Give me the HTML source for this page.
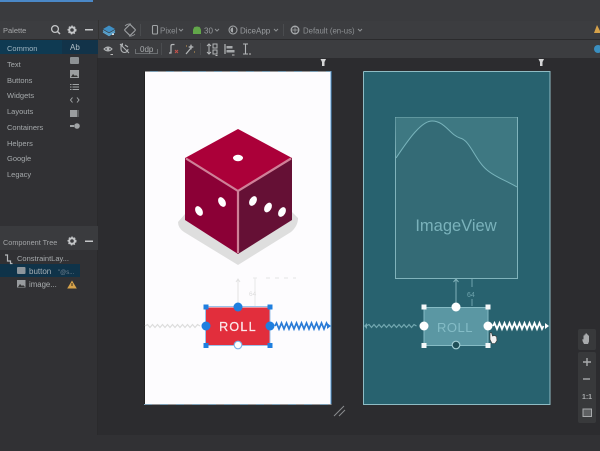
<!DOCTYPE html>
<html><head><meta charset="utf-8"><style>
html,body{margin:0;padding:0;background:#2b2b2e;width:600px;height:451px;overflow:hidden}
svg{display:block;filter:blur(.3px)}
text{font-family:"Liberation Sans",sans-serif}
</style></head><body>
<svg width="600" height="451" viewBox="0 0 600 451" xmlns="http://www.w3.org/2000/svg">
<!-- backgrounds -->
<rect width="600" height="451" fill="#2c2c2f"/>
<rect width="600" height="21" fill="#3a3b3e"/>
<rect x="0" y="0" width="93" height="2" fill="#4a88c7"/>
<rect y="21" width="600" height="19" fill="#3c3d40"/>
<rect y="39" width="600" height="1" fill="#2b2b2d"/>
<rect x="98" y="40" width="502" height="18" fill="#3c3d40"/>
<rect x="0" y="40" width="98" height="395" fill="#313134"/>
<rect x="98" y="20" width="1" height="20" fill="#333"/>
<rect x="97" y="58" width="1" height="377" fill="#2a2a2c"/>
<rect y="435" width="600" height="16" fill="#313134"/>
<!-- palette -->
<text x="3" y="33" font-size="7.500" fill="#a5a7a9">Palette</text>
<circle cx="55" cy="29" r="3.400" fill="none" stroke="#c4c6c8" stroke-width="1.300"/><path d="M57.500 31.500L60 34" stroke="#c4c6c8" stroke-width="1.500"/>
<circle cx="72" cy="30" r="2.800" fill="none" stroke="#c4c6c8" stroke-width="2"/><circle cx="72" cy="30" r="4" fill="none" stroke="#c4c6c8" stroke-width="1" stroke-dasharray="1.500 1.500"/>
<rect x="85" y="29" width="8" height="1.500" fill="#c4c6c8"/>
<rect y="40" width="62" height="14" fill="#0f3a52"/>
<rect x="62" y="40" width="36" height="14" fill="#123349"/>
<g font-size="7.500" fill="#a5a9ab">
<text x="7" y="51" fill="#9fb4c0">Common</text>
<text x="7" y="67">Text</text>
<text x="7" y="83">Buttons</text>
<text x="7" y="98">Widgets</text>
<text x="7" y="114">Layouts</text>
<text x="7" y="130">Containers</text>
<text x="7" y="146">Helpers</text>
<text x="7" y="161">Google</text>
<text x="7" y="177">Legacy</text>
</g>
<text x="70" y="50" font-size="8" fill="#b3c0c8">Ab</text>
<rect x="70" y="57" width="9" height="7" rx="1" fill="#8d9194"/>
<rect x="70" y="70" width="9" height="8" fill="#9a9d9f"/><path d="M71 77l2-3 2 2 1-1 2 2z" fill="#333"/>
<path d="M70 84.500h1.500M70 87h1.500M70 89.500h1.500M72.500 84.500h6.500M72.500 87h6.500M72.500 89.500h6.500" stroke="#a0a3a5" stroke-width="1"/>
<path d="M72.500 97.500l-2 2.500 2 2.500M77 97.500l2 2.500-2 2.500" stroke="#a0a3a5" stroke-width="1" fill="none"/>
<rect x="70" y="110" width="9" height="7" fill="#9a9d9f"/><rect x="77" y="110" width="2" height="7" fill="#5a5c5e"/>
<rect x="70" y="125" width="4" height="2" fill="#a0a3a5"/><circle cx="77" cy="126" r="2.800" fill="#a0a3a5"/>
<!-- component tree -->
<rect x="0" y="226" width="98" height="24" fill="#3a3b3e"/>
<text x="3" y="245" font-size="7.300" fill="#a3a5a7">Component Tree</text>
<circle cx="72" cy="241" r="2.800" fill="none" stroke="#c4c6c8" stroke-width="2"/><circle cx="72" cy="241" r="4" fill="none" stroke="#c4c6c8" stroke-width="1" stroke-dasharray="1.500 1.500"/>
<rect x="85" y="240.500" width="8" height="1.500" fill="#c4c6c8"/>
<rect x="0" y="264" width="80" height="13" fill="#0f3349"/>
<path d="M5 255h2.500v6h3v2.500h2" fill="none" stroke="#b5b7b9" stroke-width="1.200"/>
<text x="17" y="261" font-size="7.500" fill="#a8acae">ConstraintLay...</text>
<rect x="17" y="267" width="8.500" height="7" rx="1" fill="#8d959b"/>
<text x="29" y="274" font-size="8" fill="#a8b0b5">button</text>
<text x="58" y="274" font-size="6" fill="#728290">"@s...</text>
<rect x="17" y="280" width="8.500" height="7.500" fill="#989b9e"/><path d="M18 287l2-3 2 2 1-1 2 2z" fill="#333"/>
<text x="29" y="287" font-size="7.800" fill="#a8acae">image...</text>
<path d="M72 280.500l4.800 8h-9.600z" fill="#d6a24a"/><rect x="71.500" y="283" width="1" height="3" fill="#3a3020"/>
<!-- toolbar 1 -->
<path d="M103 29l6-3.500 6 3.500-6 3.500z" fill="#3f8fc4"/><path d="M103 32l6 3.500 6-3.500M103 30.500l6 3.500 6-3.500" fill="none" stroke="#5aa5d2" stroke-width="1.200"/>
<rect x="112" y="33.500" width="2" height="1.500" fill="#ddd"/>
<rect x="126" y="26" width="8" height="8" rx="1" transform="rotate(45 130 30)" fill="none" stroke="#9da0a3" stroke-width="1.100"/>
<path d="M125 26a7 7 0 0 1 6-2M135 34a7 7 0 0 1-6 2" fill="none" stroke="#9da0a3" stroke-width=".8"/>
<rect x="140" y="24" width="1" height="12" fill="#4a4c4f"/>
<rect x="152.500" y="25.500" width="5" height="8.500" rx="1" fill="none" stroke="#a0a3a5" stroke-width="1.100"/>
<text x="160" y="33.500" font-size="8" fill="#8e9194">Pixel</text>
<path d="M179 29l2 2 2-2" fill="none" stroke="#8e9194"/>
<path d="M193 34v-3.500a4 4 0 0 1 8 0v3.500z" fill="#62a74a"/><path d="M194.500 27l1 1.500M199.500 27l-1 1.500" stroke="#62a74a"/>
<text x="204" y="33.500" font-size="8" fill="#9a9da0">30</text>
<path d="M215 29l2 2 2-2" fill="none" stroke="#8e9194"/>
<circle cx="233" cy="30" r="4" fill="none" stroke="#a6a9ab" stroke-width="1"/><path d="M233 27.500a2.500 2.500 0 0 0 0 5z" fill="#a6a9ab"/>
<text x="240" y="33.500" font-size="8" fill="#9a9da0">DiceApp</text>
<path d="M274 29l2 2 2-2" fill="none" stroke="#8e9194"/>
<rect x="283" y="24" width="1" height="12" fill="#4a4c4f"/>
<circle cx="295" cy="30" r="3.800" fill="none" stroke="#a6a9ab" stroke-width="1.300"/><path d="M291 30h8M295 26v8" stroke="#a6a9ab" stroke-width=".7"/>
<text x="303" y="33.500" font-size="7.800" fill="#8e9194">Default (en-us)</text>
<path d="M358 29l2 2 2-2" fill="none" stroke="#8e9194"/>
<path d="M597 25l4 8h-7z" fill="#d6a24a"/>
<circle cx="598" cy="49" r="4" fill="#3a8fc0"/>
<!-- toolbar 2 -->
<path d="M104 49q4-4 8 0q-4 4-8 0z" fill="none" stroke="#b4b7b9" stroke-width="1"/><circle cx="108" cy="49" r="1.500" fill="#b4b7b9"/><path d="M110.500 54.500h2.500" stroke="#bbb"/>
<path d="M121 44v5a3.500 3.500 0 0 0 7 0M120 44l9 9M125 45l3 2" fill="none" stroke="#b0b3b5" stroke-width="1.100"/><path d="M121 44l2 2v-3z" fill="#b0b3b5"/>
<path d="M135.500 49v4.500h22v-4.500" fill="none" stroke="#7a7d80" stroke-width=".8"/>
<text x="140" y="52" font-size="8" fill="#a8abad">0dp</text>
<rect x="161" y="43" width="1" height="12" fill="#4a4c4f"/>
<path d="M169 53h2v-7q0-1.500 1.500-1.500h2" fill="none" stroke="#b4b7b9" stroke-width="1.200"/>
<path d="M175 50l3 3M178 50l-3 3" stroke="#c7534c" stroke-width="1"/>
<path d="M186 54l5-6" stroke="#b4b7b9" stroke-width="1.200"/><path d="M191 44l1 2 2 1-2 1-1 2-1-2-2-1 2-1z" fill="#a6a9ab"/><path d="M186 46h1M194 52h1" stroke="#cfa054"/>
<rect x="200" y="43" width="1" height="12" fill="#4a4c4f"/>
<path d="M209 44v10M207 46l2-2 2 2M207 52l2 2 2-2" fill="none" stroke="#b4b7b9"/>
<path d="M213 44h4v4h-4zM213 50h4v4h-4z" fill="none" stroke="#b4b7b9"/><path d="M215.500 55.500h2" stroke="#bbb"/>
<path d="M225 44v10" stroke="#b4b7b9" stroke-width="1.200"/><rect x="226.500" y="46" width="6" height="2.500" fill="#a6a9ab"/><rect x="226.500" y="50" width="8" height="2.500" fill="#a6a9ab"/><path d="M232 55h2.500" stroke="#bbb"/>
<path d="M243 44h5M245.500 44v10M243 54h5" fill="none" stroke="#b4b7b9" stroke-width="1.100"/><path d="M249 54h2" stroke="#bbb"/>
<!-- pins -->
<path d="M320.500 59h5.500l-1.500 3v4h-2.500v-4z" fill="#d4d5d6"/>
<path d="M538.500 59h5.500l-1.500 3v4h-2.500v-4z" fill="#d4d5d6"/>
<!-- phone 1 -->
<rect x="144.500" y="71.500" width="187" height="333" fill="#fdfcfe"/>
<path d="M144.500 404V71.500" stroke="#222" stroke-width="1"/>
<path d="M331 71V404" stroke="#4f97d6" stroke-width="1"/>
<path d="M150 71.500H331M144 404.500H331" stroke="#7d9fb5" stroke-width="1" stroke-dasharray="8 8"/>
<!-- dice -->
<path d="M185 214L178 222Q178 228 184 232L238 265L291 232Q298 226 298 218L292 212L238 230z" fill="#dedede"/>
<path d="M185 158L238 191V254L185 220z" fill="#8b0036"/>
<path d="M292 158L238 191V254L292 220z" fill="#651035"/>
<path d="M238 129L292 158L238 191L185 158z" fill="#ab0039"/>
<path d="M186 158.500L238 191L291 158.500M238 191V253" fill="none" stroke="#cf8098" stroke-width="2.200"/>
<ellipse cx="238" cy="158" rx="5" ry="3.200" fill="#fff"/>
<ellipse cx="199" cy="211" rx="3.400" ry="5.200" transform="rotate(-30 199 211)" fill="#fff"/>
<ellipse cx="222" cy="202" rx="3.400" ry="5.200" transform="rotate(-30 222 202)" fill="#fff"/>
<ellipse cx="253" cy="201" rx="3.400" ry="5.200" transform="rotate(30 253 201)" fill="#fff"/>
<ellipse cx="268" cy="207.500" rx="3.400" ry="5.200" transform="rotate(30 268 207.500)" fill="#fff"/>
<ellipse cx="282" cy="212" rx="3.400" ry="5.200" transform="rotate(30 282 212)" fill="#fff"/>
<!-- p1 constraints -->
<path d="M238 303V279M236 282l2-3 2 3" fill="none" stroke="#e2e2e2" stroke-width="1"/>
<path d="M253 278h4M255 278v28" stroke="#e8e8e8" fill="none"/>
<text x="249" y="296" font-size="6.500" fill="#ddd">64</text>
<path d="M266 278h30" stroke="#e4e4e4" stroke-dasharray="4 5"/>
<path d="M145 326l2.500-1.500 2.500 3 2.500-3 2.500 3 2.500-3 2.500 3 2.500-3 2.500 3 2.500-3 2.500 3 2.500-3 2.500 3 2.500-3 2.500 3 2.500-3 2.500 3 2.500-3 2.500 3 2.500-3 2.500 3 2.500-3 2.500 1.500" fill="none" stroke="#dcdcdc" stroke-width="1.200"/>
<path d="M275 326l1.500-3 2.500 6 2.500-6 2.500 6 2.500-6 2.500 6 2.500-6 2.500 6 2.500-6 2.500 6 2.500-6 2.500 6 2.500-6 2.500 6 2.500-6 2.500 6 2.500-6 2.500 6 2.500-6 2.500 6 2.500-6 1.500 3" fill="none" stroke="#2b7bd6" stroke-width="1.700"/>
<path d="M327 323l4 3-4 3z" fill="#2b7bd6"/>
<!-- button 1 -->
<rect x="206" y="307.500" width="64" height="38" fill="#e22e3c"/>
<rect x="205.500" y="306.500" width="64.500" height="39" fill="none" stroke="#9ac2ea" stroke-width="1"/>
<text x="238" y="331" font-size="12.500" fill="#fbe9eb" text-anchor="middle" letter-spacing="1.300" stroke="#fbe9eb" stroke-width=".25">ROLL</text>
<g fill="#1f7fdf"><rect x="203.500" y="304.500" width="5" height="5"/><rect x="267.500" y="304.500" width="5" height="5"/><rect x="203.500" y="343" width="5" height="5"/><rect x="267.500" y="343" width="5" height="5"/></g>
<circle cx="238" cy="307" r="4.500" fill="#1f7fdf"/>
<circle cx="206" cy="326" r="4.500" fill="#1f7fdf"/>
<circle cx="270" cy="326" r="4.500" fill="#1f7fdf"/>
<circle cx="238" cy="345" r="3.800" fill="#fff" stroke="#7ab2e8" stroke-width="1.100"/>
<!-- phone 2 -->
<rect x="363" y="71.500" width="187" height="333" fill="#28626f"/>
<path d="M363.500 71.500V404.500H550V71.500H363.500" fill="none" stroke="#8fbcc4" stroke-width="1"/>
<rect x="395.500" y="117.500" width="122" height="161" fill="#346b76" stroke="#80b3bb" stroke-width="1"/>
<path d="M396 158L395.500 117.500H517V187C505 180 495 177 487 170C475 160 470 140 460 138C450 135 445 121 432 121C420 121 405 145 396 158z" fill="#3e7882"/>
<path d="M396 158C405 145 420 121 432 121C445 121 450 135 460 138C470 140 475 160 487 170C495 177 505 180 517 187" fill="none" stroke="#78b3bb" stroke-width="1"/>
<text x="456" y="231" font-size="16.500" fill="#7ab2bb" text-anchor="middle">ImageView</text>
<!-- p2 constraints -->
<path d="M456 303V279M453.500 282l2.500-3 2.500 3" fill="none" stroke="#7fb0b8" stroke-width="1"/>
<path d="M472 279v8M472 299v7" stroke="#6ea3ac"/>
<text x="467" y="297" font-size="7" fill="#6ea3ac">64</text>
<path d="M364 326l3-3v6z" fill="#73a8b1"/>
<path d="M366 326l3-1.500 2.500 3 2.500-3 2.500 3 2.500-3 2.500 3 2.500-3 2.500 3 2.500-3 2.500 3 2.500-3 2.500 3 2.500-3 2.500 3 2.500-3 2.500 3 2.500-3 2.500 3 2.500-3 2.500 1.500" fill="none" stroke="#73a8b1" stroke-width="1.200"/>
<path d="M493 326l1.500-3 2.500 6 2.500-6 2.500 6 2.500-6 2.500 6 2.500-6 2.500 6 2.500-6 2.500 6 2.500-6 2.500 6 2.500-6 2.500 6 2.500-6 2.500 6 2.500-6 2.500 6 2.500-6 2.500 6 1.500-3" fill="none" stroke="#fff" stroke-width="1.800"/>
<path d="M545 323l4 3-4 3z" fill="#fff"/>
<!-- button 2 -->
<rect x="424" y="307.500" width="64" height="38" fill="#5b97a3" stroke="#86bbc4" stroke-width="1"/>
<text x="455" y="332" font-size="13" fill="#84bcc6" text-anchor="middle" letter-spacing=".5">ROLL</text>
<g fill="#f4f7f8"><rect x="421.500" y="304.500" width="5" height="5"/><rect x="485.500" y="304.500" width="5" height="5"/><rect x="421.500" y="343" width="5" height="5"/><rect x="485.500" y="343" width="5" height="5"/></g>
<circle cx="456" cy="307" r="4.500" fill="#fff"/>
<circle cx="424" cy="326" r="4.500" fill="#fff"/>
<circle cx="488" cy="326" r="4.500" fill="#fff"/>
<circle cx="456" cy="345" r="3.800" fill="#1f4f58" stroke="#a5d0d6" stroke-width="1.100"/>
<path d="M490 333l1.500-.5 1 3.500 2-.5 2 1 .5 4-2 3h-3l-2-4z" fill="#f2f2f2" stroke="#333" stroke-width=".6"/>
<!-- resize -->
<path d="M334 416l10-10M339 416l6-6" stroke="#8a8c8e" stroke-width="1"/>
<!-- zoom controls -->
<rect x="578" y="329" width="18" height="21" rx="2" fill="#38393b"/>
<path d="M584 344l-1.500-3v-2l1 .5v-4h1v-1h1v-1h1.500v1h1v1h1v6l-1 2.500z" fill="#a9abad"/>
<rect x="578" y="352" width="18" height="71" rx="2" fill="#38393b"/>
<path d="M583 362h8M587 358v8" stroke="#a9abad" stroke-width="1.400"/>
<path d="M583 379h7" stroke="#a9abad" stroke-width="1.400"/>
<text x="587" y="399" font-size="7" font-weight="bold" fill="#a9abad" text-anchor="middle">1:1</text>
<rect x="583" y="409" width="8.500" height="7.500" fill="#5e6062" stroke="#a9abad"/>
</svg>
</body></html>
